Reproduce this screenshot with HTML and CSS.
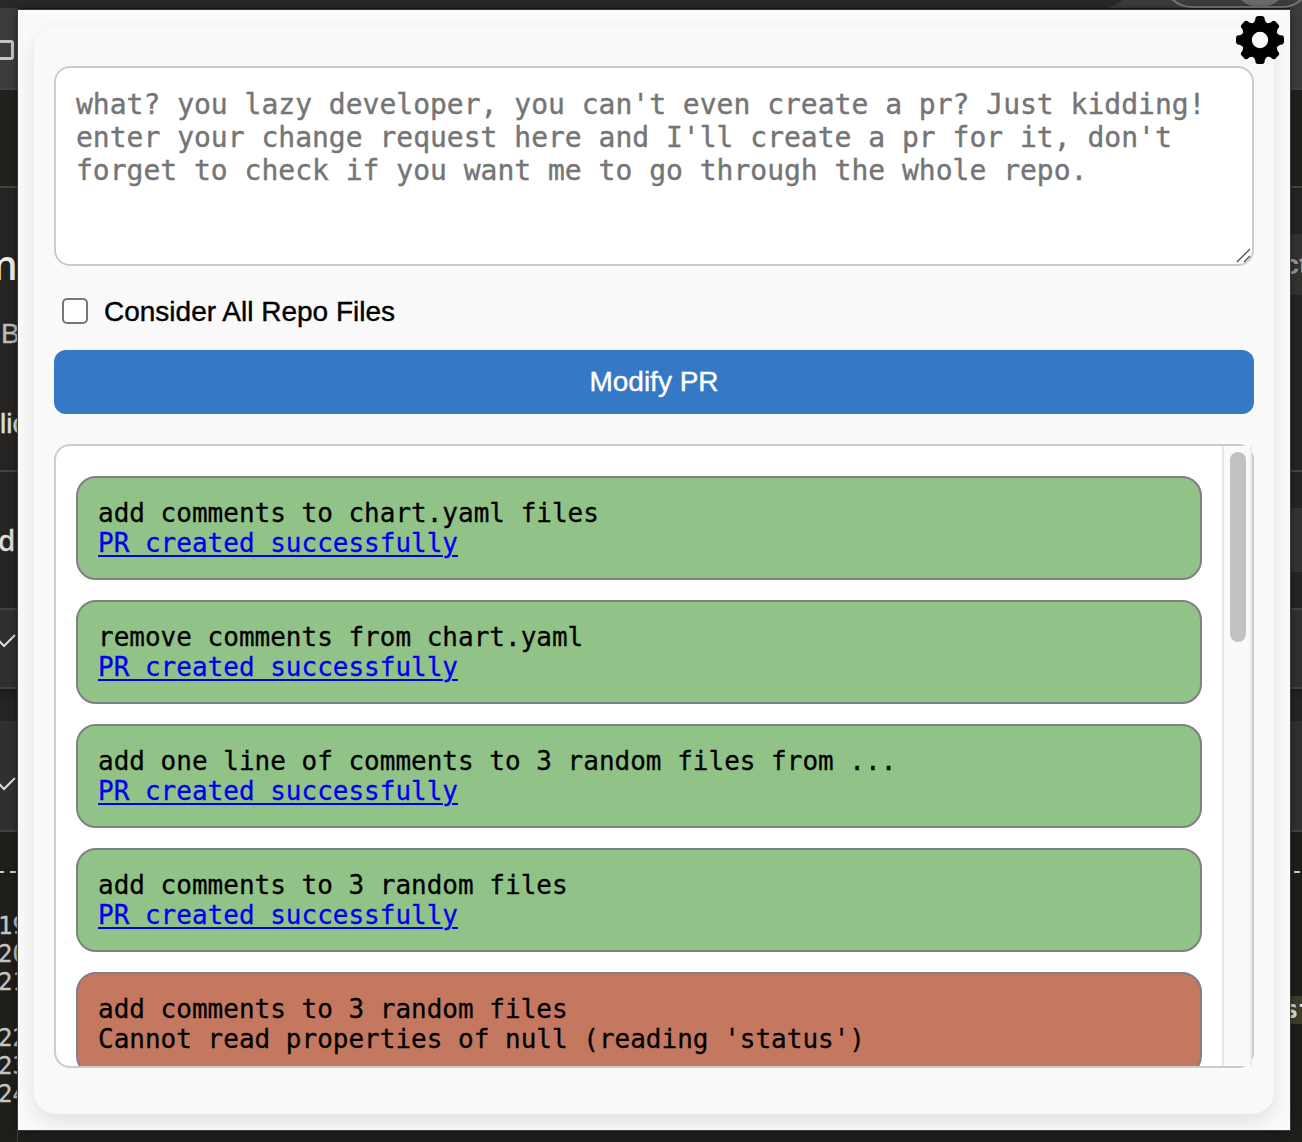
FILE: index.html
```
<!DOCTYPE html>
<html lang="en">
<head>
<meta charset="utf-8">
<title>Modify PR</title>
<link rel="stylesheet" href="styles.css">
</head>
<body>
<div class="page">
  <header class="toolbar">
    <div class="address"></div>
    <div class="omnibox"><span class="avatar"></span></div>
  </header>
  <aside class="edge edge-left">
    <div class="band nav"><svg width="18" height="26" viewBox="0 0 18 26"><rect x="-10" y="5.5" width="22.5" height="17" rx="1.5" fill="none" stroke="#c6c6c6" stroke-width="3"/></svg></div>
    <div class="band tabs"></div>
    <div class="band heading"><span class="title">m</span><span class="branch">B</span><span class="tab">lic</span></div>
    <div class="band review"><span>d</span></div>
    <div class="band check"><svg width="18" height="18" viewBox="0 0 18 18"><path d="M-3 7.5 L4 15 L15 4" fill="none" stroke="#ddd" stroke-width="2"/></svg></div>
    <div class="band gap"></div>
    <div class="band check second"><svg width="18" height="18" viewBox="0 0 18 18"><path d="M-3 7.5 L4 15 L15 4" fill="none" stroke="#ddd" stroke-width="2"/></svg></div>
    <div class="band code"><span class="dashes"></span><span>19</span><span>20</span><span>21</span><span class="skip">22</span><span>23</span><span>24</span></div>
  </aside>
  <main class="popup">
    <svg class="gear" viewBox="-24 -24 48 48" width="48" height="48" role="img" aria-label="Settings">
      <defs><path id="tooth" d="M-7.5 -16C-6.5 -18 -5 -18.5 -4.7 -20.5V-21.5Q-4.4 -24 -2 -24H2Q4.4 -24 4.7 -21.5V-20.5C5 -18.5 6.5 -18 7.5 -16Z"/></defs>
      <path fill-rule="evenodd" d="M-18 0a18 18 0 1 0 36 0a18 18 0 1 0 -36 0ZM-8.2 0a8.2 8.2 0 1 0 16.4 0a8.2 8.2 0 1 0 -16.4 0Z"/>
      <use href="#tooth"/><use href="#tooth" transform="rotate(45)"/><use href="#tooth" transform="rotate(90)"/><use href="#tooth" transform="rotate(135)"/><use href="#tooth" transform="rotate(180)"/><use href="#tooth" transform="rotate(225)"/><use href="#tooth" transform="rotate(270)"/><use href="#tooth" transform="rotate(315)"/>
    </svg>
    <section class="card">
      <div class="field">
        <textarea class="request" placeholder="what? you lazy developer, you can't even create a pr? Just kidding! enter your change request here and I'll create a pr for it, don't forget to check if you want me to go through the whole repo."></textarea>
        <svg class="grip" width="16" height="16" viewBox="0 0 16 16"><path d="M1 14L14 1M8 14L14 8" stroke="#555" stroke-width="1.4"/></svg>
      </div>
      <label class="option"><input type="checkbox" class="box"><span>Consider All Repo Files</span></label>
      <button class="submit">Modify PR</button>
      <div class="history">
        <div class="items">
          <div class="item done"><div>add comments to chart.yaml files</div><a href="#">PR created successfully</a></div>
          <div class="item done"><div>remove comments from chart.yaml</div><a href="#">PR created successfully</a></div>
          <div class="item done"><div>add one line of comments to 3 random files from ...</div><a href="#">PR created successfully</a></div>
          <div class="item done"><div>add comments to 3 random files</div><a href="#">PR created successfully</a></div>
          <div class="item failed"><div>add comments to 3 random files</div><div>Cannot read properties of null (reading 'status')</div></div>
        </div>
        <div class="track"><div class="thumb"></div></div>
      </div>
    </section>
  </main>
  <aside class="edge edge-right">
    <div class="band nav"></div>
    <div class="band tabs"></div>
    <div class="band heading"><span class="action">ct</span></div>
    <div class="band review"><span class="chip"></span></div>
    <div class="band check"></div>
    <div class="band gap"></div>
    <div class="band check second"></div>
    <div class="band code"><span class="dashes"></span><span class="added">st</span></div>
  </aside>
</div>
</body>
</html>
```
FILE: styles.css
```
* { box-sizing: border-box; }
body { margin: 0; font-family: "Liberation Sans", Arial, sans-serif; }

.page {
  width: 1302px;
  height: 1142px;
  overflow: hidden;
  display: grid;
  grid-template-columns: 18px 1272px 12px;
  grid-template-rows: 8px 1134px;
  background: #1f1e1c;
}

/* browser toolbar */
.toolbar {
  grid-column: 1 / -1;
  background: #3c3c3c;
  overflow: hidden;
  display: flex;
  justify-content: space-between;
}
.address { width: 1128px; height: 40px; margin-top: -32px; border-radius: 0 0 24px 0; background: #282828; }
.omnibox {
  flex: none;
  width: 150px;
  height: 60px;
  margin-top: -52px;
  margin-right: -10px;
  border: 2px solid #777;
  border-radius: 30px;
  display: flex;
  justify-content: center;
}
.avatar { flex: none; width: 60px; height: 60px; margin-top: -3px; margin-left: 46px; border-radius: 50%; background: #6b6b6b; }

/* page content visible at both sides of the popup */
.edge { display: flex; flex-direction: column; overflow: hidden; color: #ddd; }
.band { flex: none; overflow: hidden; white-space: nowrap; border-bottom: 2px solid #444341; background: #252422; }
.band span { display: block; }
.nav { height: 82px; background: #3c3c3c; padding-top: 28px; }
.tabs { height: 98px; background: #21201d; }
.heading { height: 284px; }
.review { height: 138px; }
.check { height: 79px; background: #30302e; padding-top: 21px; }
.gap { height: 32px; border: 0; background: linear-gradient(#1e1d1b, #252422 12px); }
.second { height: 111px; padding-top: 53px; }
.code { height: 310px; border: 0; background: #1f1e1b; }

.edge-left { border-right: 1px solid #3c3c3c; }
.title { font: 500 41px/48px "Noto Sans", sans-serif; margin: 52px 0 0 -21px; color: #eee; }
.branch { font: 28px/32px "Liberation Sans", sans-serif; margin: 30px 0 0 1px; color: #bbb; -webkit-text-stroke: .4px; }
.tab { font: 28px/32px "Liberation Sans", sans-serif; margin-top: 58px; -webkit-text-stroke: .5px; }
.review span { font: 500 28px/32px "Noto Sans", sans-serif; margin: 52px 0 0 -2px; -webkit-text-stroke: .3px; }
.code span { font: 24px/28px "DejaVu Sans Mono", monospace; margin-left: -2px; color: #c4c4c4; -webkit-text-stroke: .3px; }
.code .dashes { height: 2px; margin: 39px 0 39px -2px; background: repeating-linear-gradient(90deg, #ccc 0 6px, transparent 6px 12px); }
.code .skip { margin-top: 28px; }

.edge-right .action { margin-top: 46px; height: 61px; background: #333230; color: #999; font: bold 27px/62px "Liberation Sans", sans-serif; text-indent: -6px; }
.edge-right .chip { height: 64px; margin: 36px 0 0; background: #343331; }
.edge-right .dashes { width: 6px; margin-left: 4px; }
.edge-right .added { margin: 123px 0 0; height: 28px; background: #3a3f2c; color: #ddd; text-indent: -6px; font-weight: bold; -webkit-text-stroke: 0; }

/* popup */
.popup {
  position: relative;
  height: 1120px;
  margin-top: 2px;
  padding: 16px;
  background: #fafafa;
  box-shadow: 0 0 0 1px #3c3e3c, 0 0 8px rgba(0, 0, 0, .5);
  overflow: hidden;
}
.gear { position: absolute; right: 6px; top: 6px; z-index: 1; }
.card {
  height: 1088px;
  padding: 40px 20px 20px;
  border-radius: 22px;
  background: #f9f9f9;
  box-shadow: 0 8px 20px rgba(0, 0, 0, .1);
}
.field { position: relative; height: 200px; }
.request {
  display: block;
  width: 1200px;
  height: 200px;
  padding: 20px;
  border: 2px solid #ccc;
  border-radius: 16px;
  background: #fff;
  resize: none;
  overflow: hidden;
  font: 28px/33px "DejaVu Sans Mono", monospace;
}
.request::placeholder { color: #757575; -webkit-text-stroke: .4px #757575; }
.grip { position: absolute; right: 2px; bottom: 2px; }

.option { display: flex; align-items: center; gap: 16px; height: 32px; margin: 29px 0 23px 8px; font-size: 28px; line-height: 32px; color: #000; }
.option span { padding-top: 1px; -webkit-text-stroke: .4px; }
.box { appearance: none; width: 26px; height: 26px; margin: 0; border: 2px solid #767676; border-radius: 5px; background: #fff; }
.submit {
  display: block;
  width: 100%;
  height: 64px;
  padding: 0;
  border: 0;
  border-radius: 12px;
  background: #3478c6;
  color: #fff;
  font: 28px/32px "Liberation Sans", Arial, sans-serif;
  -webkit-text-stroke: .4px;
}
.history {
  display: flex;
  height: 624px;
  margin-top: 30px;
  border: 2px solid #ccc;
  border-radius: 16px;
  background: #fff;
}
.items {
  flex: 1;
  display: flex;
  flex-direction: column;
  gap: 20px;
  padding: 30px 20px 0;
  overflow: hidden;
  font: 26px/30px "DejaVu Sans Mono", monospace;
  -webkit-text-stroke: .3px;
}
.item { flex: none; height: 104px; padding: 20px; border: 2px solid #808080; border-radius: 20px; }
.done { background: #91c388; }
.failed { background: #c57860; }
.item a { color: #00e; text-decoration-thickness: 2px; text-underline-offset: 3px; }
.track { width: 30px; padding: 6px; border-left: 2px solid #e6e6e6; border-right: 2px solid #ebebeb; background: #fafafa; }
.thumb { width: 16px; height: 190px; border-radius: 8px; background: #c1c1c1; }
```
